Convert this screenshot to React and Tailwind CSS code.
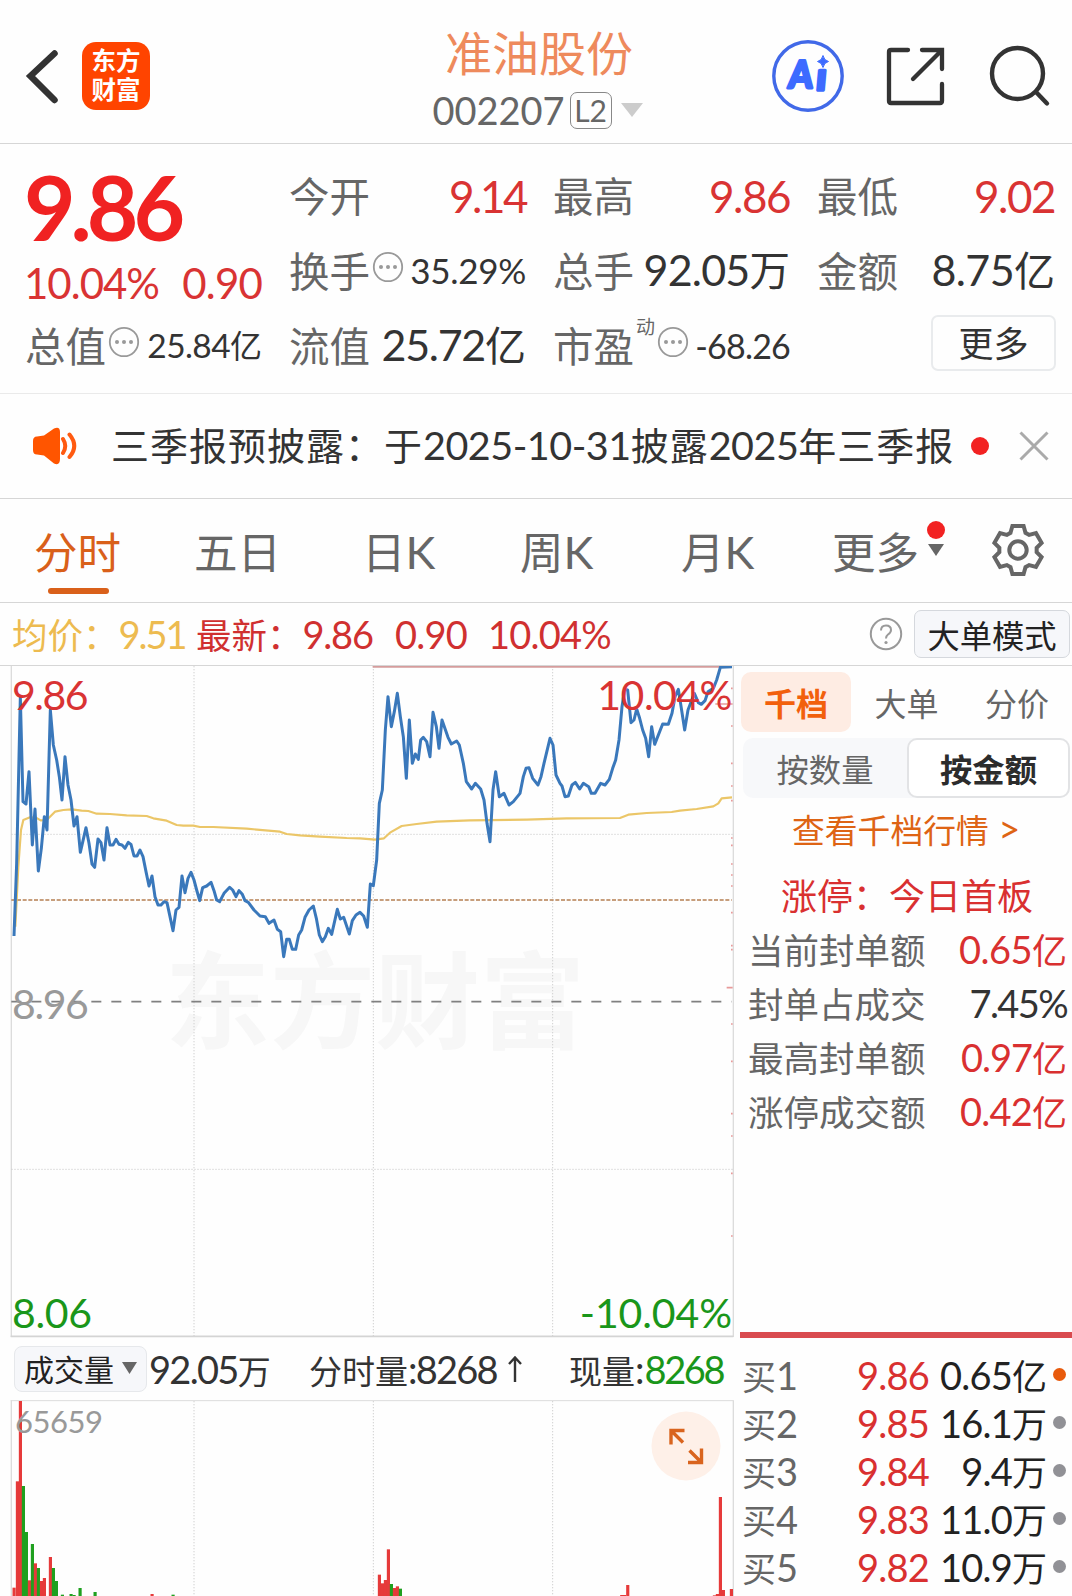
import React from "react";

const LATIN = /([0-9.%\-:A-Z>]+)/;

// Mixed text: Latin runs get their own face and size, Chinese stays in the base face.
function Txt({ s, n = "" }) {
  return (
    <span className="whitespace-nowrap">
      {s.split(LATIN).map((part, i) =>
        i % 2 ? (
          <span key={i} className={`font-['Lato',sans-serif] ${n}`}>
            {part}
          </span>
        ) : (
          part
        )
      )}
    </span>
  );
}

function Dots({ className = "" }) {
  return (
    <svg viewBox="0 0 32 32" className={`h-8 w-8 shrink-0 ${className}`}>
      <circle cx="16" cy="16" r="14.2" fill="none" stroke="#999" strokeWidth="1.8" />
      <circle cx="9" cy="16" r="2" fill="#999" />
      <circle cx="16" cy="16" r="2" fill="#999" />
      <circle cx="23" cy="16" r="2" fill="#999" />
    </svg>
  );
}

function Header() {
  return (
    <header className="flex h-[144px] shrink-0 items-start border-b border-[#d6d6d6]">
      <svg viewBox="0 0 34 58" className="mt-[47px] ml-[25px] h-[58px] w-[34px]">
        <path d="M29.500 6.500L5.500 29L29.500 53" fill="none" stroke="#333" strokeWidth="6.500" strokeLinecap="round" strokeLinejoin="miter" />
      </svg>
      <div className="mt-[42px] ml-[23px] flex h-[68px] w-[68px] flex-col items-center justify-center rounded-[14px] bg-[#ff4400] text-[24.500px] leading-[29px] font-bold text-white">
        <span className="-mt-[4px]">东方</span>
        <span>财富</span>
      </div>
      <div className="ml-[239px] flex w-[300px] flex-col items-center">
        <h1 className="mt-[20px] h-[62px] text-[47px] leading-[62px] text-[#ee8a5c]">准油股份</h1>
        <div className="mt-[7px] ml-[-3px] flex h-[42px] items-center text-[#666]">
          <Txt s="002207" n="text-[38px] leading-[42px]" />
          <span className="ml-[5px] flex h-[37px] w-[42px] items-center justify-center rounded-[7px] border border-[#888] font-['Lato',sans-serif] text-[30px] leading-none">
            L2
          </span>
          <svg viewBox="0 0 22 14" className="ml-[9px] h-[14px] w-[22px]">
            <path d="M0 0H22L11 14Z" fill="#ccc" />
          </svg>
        </div>
      </div>
      <svg viewBox="0 0 74 74" className="mt-[39px] ml-[82px] h-[74px] w-[74px]">
        <circle cx="37" cy="37" r="34.2" fill="none" stroke="#4169e8" strokeWidth="3.4" />
        <g fill="#3d6bff" stroke="#3d6bff" strokeWidth="3" strokeLinejoin="round" fontFamily="Lato, sans-serif" fontWeight="900" transform="translate(6 0) skewX(-5)">
          <text x="15" y="49" fontSize="38" textLength="24" lengthAdjust="spacingAndGlyphs">A</text>
          <text x="43" y="51" fontSize="38" strokeWidth="3.500">ı</text>
        </g>
        <path d="M52 16.5Q53 21.5 57.5 22.5Q53 23.5 52 28.5Q51 23.5 46.5 22.5Q51 21.5 52 16.5Z" fill="#3d6bff" stroke="#3d6bff" />
      </svg>
      <svg viewBox="0 0 60 60" className="mt-[46px] ml-[40px] h-[60px] w-[60px]" fill="none" stroke="#333" strokeWidth="4.300" strokeLinecap="round" strokeLinejoin="round">
        <path d="M23 4H6Q4 4 4 6V55Q4 57 6 57H55Q57 57 57 55V38" />
        <path d="M37 4H57V23M56 5L28 33" strokeLinejoin="miter" />
      </svg>
      <svg viewBox="0 0 62 62" className="mt-[45px] ml-[44px] h-[62px] w-[62px]" fill="none" stroke="#333" strokeWidth="4.400" strokeLinecap="round">
        <circle cx="28.5" cy="28.5" r="25.5" />
        <path d="M47 47L58 58.5" />
      </svg>
    </header>
  );
}

function Cell({ label, value, n = "text-[43px] tracking-[-0.8px]", c = "text-[#333]", v = "text-[41px]", dots, sup }) {
  return (
    <div className="flex items-center justify-between">
      <div className="flex items-center">
        <span className="text-[40.5px] text-[#666]">{label}</span>
        {sup && <span className="mb-[41px] ml-[2px] text-[19px] leading-none text-[#666]">{sup}</span>}
        {dots && <Dots className="mb-[8px] ml-[2px]" />}
      </div>
      <span className={`${v} ${c}`}>
        <Txt s={value} n={n} />
      </span>
    </div>
  );
}

function Quote() {
  return (
    <section className="grid h-[250px] shrink-0 grid-cols-[237px_237px_237px_238px] grid-rows-[75px_75px_75px] gap-x-[27px] border-b border-[#eaeaea] pt-[14px] pl-[25px]">
      <div className="row-span-2 flex flex-col">
        <span className="-ml-[1px] mt-[8px] h-[82px] font-['Lato',sans-serif] text-[89px] leading-[82px] font-bold tracking-[-5px] text-[#f02222]">9.86</span>
        <div className="mt-[11px] flex justify-between font-['Lato',sans-serif] text-[42px] leading-[48px] text-[#d93333]">
          <span className="-ml-px tracking-[-1px]">10.04%</span>
          <span className="tracking-[-0.8px]">0.90</span>
        </div>
      </div>
      <Cell label="今开" value="9.14" n="text-[44px] tracking-[-2.500px]" c="text-[#d93333]" />
      <Cell label="最高" value="9.86" n="text-[44px] tracking-[-1.500px]" c="text-[#d93333]" />
      <Cell label="最低" value="9.02" n="text-[44px] tracking-[-1.500px]" c="text-[#d93333]" />
      <Cell label="换手" value="35.29%" n="text-[35px] tracking-[-0.3px]" v="text-[32px]" dots />
      <Cell label="总手" value="92.05万" n="text-[43px] tracking-[-0.8px]" v="text-[40.500px]" />
      <Cell label="金额" value="8.75亿" n="text-[43px] tracking-[-0.6px]" v="text-[41px]" />
      <Cell label="总值" value="25.84亿" n="text-[33.500px] tracking-[-0.6px]" v="text-[32px]" dots />
      <Cell label="流值" value="25.72亿" n="text-[43px] tracking-[-1.300px]" v="text-[41px]" />
      <Cell label="市盈" value="-68.26" n="text-[34px] tracking-[-0.8px]" v="text-[32px]" dots sup="动" />
      <div className="flex items-center justify-end">
        <span className="-mr-px mb-[6px] flex h-[56px] w-[125px] items-center justify-center rounded-[7px] border-2 border-[#e9ebed] pb-[3px] text-[35px] leading-none text-[#333]">更多</span>
      </div>
    </section>
  );
}

function Notice() {
  return (
    <section className="flex h-[105px] shrink-0 items-center border-b border-[#d6d6d6] pl-[33px]">
      <svg viewBox="0 0 44 38" className="h-[38px] w-[44px]">
        <path d="M4 9.5Q0 9.5 0 14V23Q0 27.500 4 27.500L11 28.500L21 36.500Q27 39 27 32V5Q27 -1 21 1.500L11 8.500Z" fill="#ff5500" />
        <path d="M30 12Q34.500 19 30 26M36.500 7.500Q46 19 36.500 30" fill="none" stroke="#ff5a10" strokeWidth="4" strokeLinecap="round" />
      </svg>
      <span className="mb-[2px] ml-[34px] w-[841px] text-[38px] tracking-[1px] text-[#333]">
        <Txt s="三季报预披露：于2025-10-31披露2025年三季报" n="text-[39.5px] tracking-[-0.5px]" />
      </span>
      <span className="ml-[19px] h-[18px] w-[18px] rounded-full bg-[#f22222]" />
      <svg viewBox="0 0 30 30" className="ml-[30px] h-[30px] w-[30px]">
        <path d="M1.500 1.500L28.500 28.500M28.500 1.500L1.500 28.500" stroke="#aaa" strokeWidth="3" />
      </svg>
    </section>
  );
}

const gear = [0, 60, 120, 180, 240, 300]
  .flatMap((deg) => {
    const a = (deg * Math.PI) / 180;
    return [[-7.5, -17.2], [-5.6, -24], [5.6, -24], [7.5, -17.2]].map(
      ([x, y]) => `${(x * Math.cos(a) - y * Math.sin(a)).toFixed(2)},${(x * Math.sin(a) + y * Math.cos(a)).toFixed(2)}`
    );
  })
  .join(" ");

function Tabs() {
  return (
    <nav className="flex h-[104px] shrink-0 border-b border-[#d6d6d6] text-[43.500px] leading-[104px] text-[#666]">
      <div className="ml-[34px] flex w-[160px] flex-col">
        <span className="h-[89px] text-[#d9601a]">分时</span>
        <span className="ml-[14px] h-[6px] w-[61px] rounded-full bg-[#d9601a]" />
      </div>
      <span className="w-[168px]"><Txt s="五日" /></span>
      <span className="w-[158px]"><Txt s="日K" n="text-[45px]" /></span>
      <span className="w-[161px]"><Txt s="周K" n="text-[45px]" /></span>
      <span className="w-[151px]"><Txt s="月K" n="text-[45px]" /></span>
      <span>更多</span>
      <div className="ml-[8px] flex w-[18px] flex-col items-center">
        <span className="mt-[22px] h-[18px] w-[18px] rounded-full bg-[#f22222]" />
        <svg viewBox="0 0 16 12" className="mt-[5px] h-[12px] w-[16px]"><path d="M0 0H16L8 12Z" fill="#666" /></svg>
      </div>
      <svg viewBox="-27 -27 54 54" className="mt-[24px] ml-[46px] h-[54px] w-[54px]" fill="none" stroke="#666" strokeWidth="4">
        <polygon points={gear} />
        <circle r="8.700" />
      </svg>
    </nav>
  );
}

function InfoBar() {
  return (
    <div className="flex h-[63px] shrink-0 items-center border-b border-[#d6d6d6] text-[35.5px] text-[#d03030]">
      <span className="ml-[12px] w-[184px] text-[#edbb50]"><Txt s="均价：9.51" n="text-[38px] tracking-[-2px]" /></span>
      <span className="w-[199px]"><Txt s="最新：9.86" n="text-[38px] tracking-[-1.200px]" /></span>
      <span className="w-[93px]"><Txt s="0.90" n="text-[38px] tracking-[-0.8px]" /></span>
      <Txt s="10.04%" n="text-[38px] tracking-[-0.8px]" />
      <svg viewBox="0 0 34 34" className="mr-[11px] ml-auto h-[34px] w-[34px]">
        <circle cx="17" cy="17" r="15.200" fill="none" stroke="#999" strokeWidth="2" />
        <path d="M12 13.500Q12 8.500 17 8.500Q22 8.500 22 13Q22 15.500 19 17.500Q17 19 17 21.500" fill="none" stroke="#999" strokeWidth="2" />
        <circle cx="17" cy="25.500" r="1.600" fill="#999" />
      </svg>
      <span className="mr-[2px] flex h-[48px] w-[156px] items-center justify-center rounded-[7px] border border-[#d5d8dd] bg-[#f6f7fa] text-[32.300px] leading-none text-[#222]">大单模式</span>
    </div>
  );
}

const shift = (pts) => pts.map(([x, y]) => [x + 1080, y]);
const price = [
  [42,828],[50,610],[61,112],[69,425],[78,432],[87,335],[97,555],[105,447],[115,633],[124,565],[133,470],[141,510],[151,150],[160,255],[170,300],[178,350],[186,420],[195,290],[204,375],[213,420],[222,498],[231,470],[241,577],[258,503],[267,550],[276,612],[284,622],[294,537],[303,548],[312,600],[321,503],[330,555],[339,555],[348,538],[357,553],[366,555],[375,565],[385,547],[393,553],[402,588],[411,588],[420,570],[429,590],[438,635],[447,678],[456,648],[465,710],[474,735],[483,735],[492,725],[501,728],[510,770],[519,812],[528,750],[537,742],[546,648],[555,698],[564,655],[573,637],[582,660],[590,690],[599,722],[608,683],[620,678],[633,667],[642,692],[650,720],[659,725],[672,700],[689,682],[698,690],[708,710],[717,692],[727,703],[735,722],[745,727],[762,750],[780,768],[796,770],[807,790],[822,780],[832,808],[842,815],[851,890],[860,838],[868,838],[877,868],[887,868],[896,825],[905,810],[915,772],[927,750],[940,738],[949,775],[958,825],[967,845],[976,830],[985,805],[995,823],[1012,748],[1021,777],[1031,772],[1048,822],[1057,782],[1068,765],[1080,757],[1091,768],
  ...shift([[22,802],[31,672],[40,677],[50,600],[58,430],[67,390],[76,210],[84,110],[94,200],[103,155],[112,100],[121,170],[130,230],[139,355],[148,180],[157,310],[166,282],[175,298],[182,240],[190,232],[200,245],[210,290],[219,157],[229,200],[237,265],[246,180],[264,232],[274,252],[290,243],[298,255],[310,310],[319,365],[335,387],[346,370],[362,387],[372,420],[381,490],[390,545],[399,390],[407,335],[418,410],[432,400],[447,435],[460,425],[480,400],[490,350],[498,325],[507,323],[518,355],[534,375],[543,350],[552,310],[570,235],[579,255],[588,345],[600,370],[606,378],[615,410],[625,408],[636,375],[646,367],[659,387],[670,370],[686,380],[694,400],[705,400],[722,370],[735,375],[748,358],[758,325],[767,300],[777,240],[786,140],[794,88],[803,90],[813,188],[822,180],[830,147],[839,175],[848,210],[857,235],[866,290],[875,200],[884,253],[908,192],[925,193],[936,160],[945,110],[955,88],[964,145],[974,210],[984,150],[1003,100],[1015,128],[1024,133],[1035,122],[1044,95],[1060,85],[1070,60],[1081,22],[1116,20]]),
];
const average = [
  [46,800],[55,620],[63,510],[70,480],[90,472],[108,473],[122,481],[140,480],[150,470],[165,455],[190,450],[215,448],[245,452],[265,453],[290,461],[330,462],[380,466],[440,468],[460,475],[500,482],[530,495],[550,497],[580,497],[600,501],[640,501],[740,506],[840,515],[860,522],[900,526],[960,530],[1040,534],
  ...shift([[0,535],[45,539],[72,535],[90,518],[125,498],[170,492],[230,485],[330,481],[500,479],[620,475],[780,474],[805,464],[860,459],[935,456],[960,452],[1010,447],[1060,439],[1075,430],[1085,415],[1116,412]]),
];
const ticks = [85,198,310,378,422,534,556,612,645,678,758,857,869,1092,1204,1361,1428,1540,1728];

function PriceChart() {
  return (
    <div className="relative h-[672px] shrink-0 font-['Lato',sans-serif] text-[41px] leading-[40px]">
      <span className="absolute top-[268px] left-[165px] font-['Noto_Sans_CJK_SC',sans-serif] text-[105px] leading-[120px] font-bold whitespace-nowrap text-[#f7f7f7]">东方财富</span>
      <svg viewBox="0 18 2202 2016" className="absolute inset-0 h-[672px] w-[734px]" fill="none">
        <path d="M34 18V2031M2200 18V2031" stroke="#dcdcdc" strokeWidth="4" />
        <path d="M32 2029H2200" stroke="#d4d4d4" strokeWidth="5" />
        <path d="M582 18V2028M1120 18V2028M1658 18V2028M34 523H2198M34 1528H2198" stroke="#d0d0d0" strokeWidth="3" strokeDasharray="4 5" />
        <path d="M34 1025H2195" stroke="#808080" strokeWidth="5" strokeDasharray="30 30" />
        <path d="M34 720H2195" stroke="#b57f52" strokeWidth="4" strokeDasharray="12 5" />
        <path d="M1118 20H2196" stroke="#d59c9c" strokeWidth="6" />
        <polyline points={average.join(" ")} stroke="#ebc668" strokeWidth="6.500" strokeLinejoin="round" />
        <polyline points={price.join(" ")} stroke="#3a78bb" strokeWidth="9" strokeLinejoin="round" />
        <path d={ticks.map((y) => `M2193 ${y}H2198`).join("") + "M2180 983H2198M2146 132H2198"} stroke="#e79a9a" strokeWidth="5" />
      </svg>
      <span className="absolute top-[9px] left-[12px] tracking-[-1.500px] text-[#d93333]">9.86</span>
      <span className="absolute top-[9px] right-[2px] tracking-[-0.5px] text-[#d93333]">10.04%</span>
      <span className="absolute top-[318px] left-[12px] tracking-[-1.400px] text-[#999]">8.96</span>
      <span className="absolute top-[627px] left-[12px] tracking-[-0.3px] text-[#1a961a]">8.06</span>
      <span className="absolute top-[627px] right-[2px] tracking-[-0.1px] text-[#1a961a]">-10.04%</span>
    </div>
  );
}

function VolumeBar() {
  return (
    <div className="flex h-[62px] shrink-0 items-center text-[33px] text-[#333]">
      <span className="ml-[14px] flex h-[46px] w-[133px] shrink-0 items-center rounded-[8px] border border-[#e6e8eb] bg-[#f6f7fa] pb-[3px] pl-[9px] text-[30px] leading-none text-[#222]">
        成交量
        <svg viewBox="0 0 15 12" className="mt-[1px] ml-[8px] h-[12px] w-[15px]"><path d="M0 0H15L7.500 12Z" fill="#666" /></svg>
      </span>
      <span className="ml-[2px] w-[160px]"><Txt s="92.05万" n="text-[38px] tracking-[-1.700px]" /></span>
      <span className="flex w-[260px] items-center">
        <Txt s="分时量:8268" n="text-[38px] tracking-[-1.800px]" />
        <svg viewBox="0 0 14 26" className="ml-[11px] h-[26px] w-[14px]" fill="none" stroke="#333" strokeWidth="2.400"><path d="M7 26V1.500M1 8L7 1.500L13 8" /></svg>
      </span>
      <Txt s="现量:" n="text-[38px]" />
      <span className="text-[#1a961a]"><Txt s="8268" n="text-[38px] tracking-[-2.400px]" /></span>
    </div>
  );
}

const R = "#e63a3a";
const G = "#1fa01f";
const bars = [
  [42,803,R],[52,484,R],[61,243,R],[70,498,G],[79,636,G],[88,781,R],[97,672,G],[106,730,R],[115,744,G],[124,783,R],[133,774,R],[151,711,R],[160,744,G],[169,783,G],[187,824,G],[213,822,G],[222,825,G],[240,804,G],[285,816,G],[456,822,R],[519,824,G],
  [1138,764,R],[1147,790,R],[1156,780,R],[1165,688,R],[1174,792,G],[1183,804,R],[1192,799,R],[1201,806,G],[1865,825,R],[1873,825,R],[1883,795,R],[2143,826,R],[2152,822,R],[2161,531,R],[2170,810,R],[2194,807,R],
];

function VolumeChart() {
  return (
    <div className="relative h-[196px] shrink-0">
      <svg viewBox="0 240 2202 588" className="absolute inset-0 h-[196px] w-[734px]" fill="none">
        <path d="M34 241V828M2200 241V828" stroke="#dcdcdc" strokeWidth="4" />
        <path d="M32 242H2200" stroke="#dcdcdc" strokeWidth="3" />
        <path d="M582 243V828M1120 243V828M1658 243V828" stroke="#d0d0d0" strokeWidth="3" strokeDasharray="4 5" />
        {bars.map(([x, y, c]) => (
          <rect key={x} x={x - 4.5} y={y} width="9.500" height={830 - y} fill={c} />
        ))}
      </svg>
      <span className="absolute top-[5px] left-[15px] font-['Lato',sans-serif] text-[31px] leading-[32px] tracking-[-0.5px] text-[#999]">65659</span>
      <svg viewBox="0 0 70 70" className="absolute top-[11px] left-[651px] h-[70px] w-[70px]">
        <circle cx="35" cy="35" r="34.500" fill="#fef0e8" />
        <path d="M33.500 19.500H20V33.500M20.500 20L32 31.500M37 51.500H50.500V37.500M50 51L38.500 39.500" fill="none" stroke="#d9641e" strokeWidth="3.400" />
      </svg>
    </div>
  );
}

const stats = [
  ["当前封单额", "0.65亿", "text-[#d93030]", "text-[38px] tracking-[-0.5px]"],
  ["封单占成交", "7.45%", "text-[#333]", "text-[38px] tracking-[-1.600px]"],
  ["最高封单额", "0.97亿", "text-[#d93030]", "text-[38px] tracking-[-1px]"],
  ["涨停成交额", "0.42亿", "text-[#d93030]", "text-[38px] tracking-[-0.8px]"],
];
const bids = [
  ["买1", "9.86", "0.65亿", "bg-[#e85a0c]"],
  ["买2", "9.85", "16.1万", "bg-[#919196]"],
  ["买3", "9.84", "9.4万", "bg-[#919196]"],
  ["买4", "9.83", "11.0万", "bg-[#919196]"],
  ["买5", "9.82", "10.9万", "bg-[#919196]"],
];

function SidePanel() {
  return (
    <aside className="flex flex-1 flex-col pt-[6px] text-[#666]">
      <div className="ml-[7px] flex h-[60px] text-[32px] leading-[60px]">
        <span className="flex h-[60px] w-[110px] justify-center rounded-[10px] bg-[#feece3] font-bold text-[#f2600c]">千档</span>
        <span className="flex w-[111px] justify-center">大单</span>
        <span className="flex w-[110px] justify-center">分价</span>
      </div>
      <div className="mt-[6px] ml-[9px] flex h-[60px] w-[327px] rounded-[10px] bg-[#f7f8fa] text-[32.300px] leading-[60px]">
        <span className="flex w-[164px] justify-center">按数量</span>
        <span className="flex h-[60px] w-[163px] justify-center rounded-[10px] border-2 border-[#e2e3e5] bg-white leading-[56px] font-bold text-[#2c2c2c]">按金额</span>
      </div>
      <div className="mt-[1px] ml-[58px] h-[60px] text-[32.800px] leading-[60px] text-[#de6414]">
        <Txt s="查看千档行情 >" n="text-[38px] leading-none ml-[2px]" />
      </div>
      <div className="mt-[9px] ml-[47px] h-[54px] text-[36px] leading-[53px] text-[#d93030]">涨停：今日首板</div>
      {stats.map(([k, v, c, n]) => (
        <div key={k} className="ml-[14px] flex h-[54px] w-[319px] items-center justify-between text-[35.500px] leading-[54px]">
          <span>{k}</span>
          <span className={`text-[35px] ${c}`}><Txt s={v} n={n} /></span>
        </div>
      ))}
      <div className="mt-auto ml-[6px] h-[6px] bg-[#d94b4f]" />
      <div className="mt-[13px] flex h-[245px] flex-col">
        {bids.map(([k, p, v, c]) => (
          <div key={k} className="ml-[8px] flex h-[48px] shrink-0 items-center text-[34px] leading-[48px]">
            <span className="w-[86px]"><Txt s={k} n="text-[38px] tracking-[-1px]" /></span>
            <span className="w-[101px] text-right text-[#d93030]"><Txt s={p} n="text-[38px] tracking-[-0.8px]" /></span>
            <span className="w-[118px] text-right text-[35px] text-[#222]"><Txt s={v} n="text-[38px] tracking-[-0.8px]" /></span>
            <span className={`mb-[2px] ml-[6px] h-[13px] w-[13px] rounded-full ${c}`} />
          </div>
        ))}
      </div>
    </aside>
  );
}

export default function App() {
  return (
    <main className="flex h-[1596px] w-[1072px] flex-col overflow-hidden bg-[#fefefe] font-['Noto_Sans_CJK_SC',sans-serif]">
      <Header />
      <Quote />
      <Notice />
      <Tabs />
      <InfoBar />
      <div className="flex h-[930px]">
        <div className="flex w-[734px] shrink-0 flex-col">
          <PriceChart />
          <VolumeBar />
          <VolumeChart />
        </div>
        <SidePanel />
      </div>
    </main>
  );
}
